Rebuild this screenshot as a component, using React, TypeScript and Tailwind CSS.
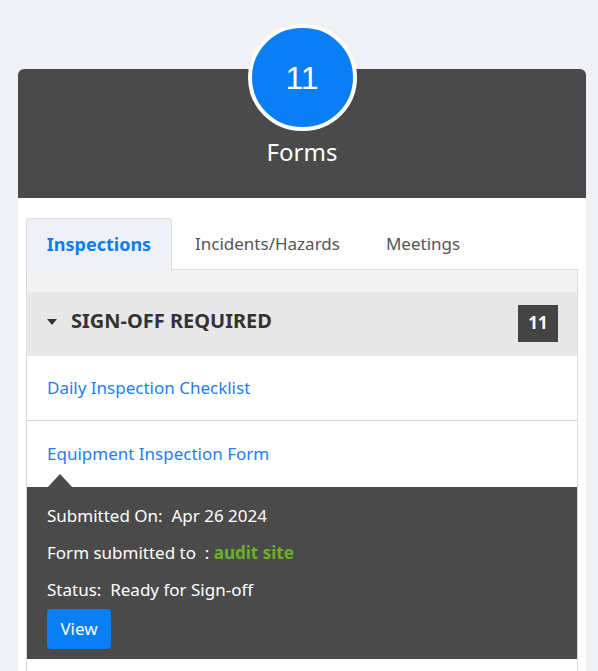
import React from "react";

export default function App() {
  return (
    <div className="min-h-[671px] bg-[#f0f1f6] pt-[69px] px-[18px] pb-0 overflow-hidden" style={{ fontFamily: '"Noto Sans", sans-serif' }}>
      <div className="w-[568px] rounded-t-[6px] bg-white">
        {/* Header */}
        <div className="bg-[#4a4a4a] rounded-t-[6px] h-[129px] flex flex-col items-center">
          <div className="mt-[-45px] w-[109px] h-[107px] rounded-full border-[4px] border-white bg-[#0a7ef5] flex items-center justify-center">
            <span className="text-white text-[32px] leading-none" style={{ fontFamily: '"Liberation Sans", Arial, sans-serif' }}>11</span>
          </div>
          <div className="mt-[5px] text-white text-[24px] leading-[32px]">Forms</div>
        </div>
        {/* Body */}
        <div className="px-[8px] pt-[20px]">
          {/* Tabs */}
          <div className="flex h-[52px] border-b border-[#dcdcdc]">
            <div className="w-[146px] h-[53px] pb-[2px] bg-[#f0f1f6] border border-[#dcdcdc] border-b-0 rounded-t-[4px] flex items-center justify-center text-[#0a7ef5] font-bold text-[18px]">
              Inspections
            </div>
            <div className="ml-[23px] flex items-center text-[#555] text-[17px]">Incidents/Hazards</div>
            <div className="ml-[46px] flex items-center text-[#555] text-[17px]">Meetings</div>
          </div>
          {/* Content */}
          <div className="bg-[#f2f2f2] border-x border-[#dcdcdc] pt-[22px]">
            <div className="bg-[#e8e8e8] rounded-t-[5px] h-[64px] flex items-center pl-[20px] pr-[19px]">
              <svg width="10" height="6" viewBox="0 0 10 6" className="mr-[14px] mb-[5px]">
                <path d="M0 0 L10 0 L5 6 Z" fill="#333" />
              </svg>
              <span className="font-bold text-[20px] text-[#333] flex-1 pb-[6px]">SIGN-OFF REQUIRED</span>
              <span className="bg-[#444] text-white font-bold text-[17px] w-[40px] h-[37px] mb-[2px] flex items-center justify-center">11</span>
            </div>
            <div className="bg-white h-[65px] flex items-center pl-[20px] pb-[1px] border-b border-[#d4d4d4] text-[#1d7ff0] text-[17px]">
              Daily Inspection Checklist
            </div>
            <div className="bg-white h-[66px] flex items-center pl-[20px] pb-[1px] text-[#1d7ff0] text-[17px]">
              Equipment Inspection Form
            </div>
            <div className="relative bg-[#4a4a4a] pl-[20px] pt-[17px] pb-[10px] text-white text-[17px]">
              <svg width="26" height="14" viewBox="0 0 26 14" className="absolute left-[20px] top-[-13px]">
                <path d="M0 14 L13 0 L26 14 Z" fill="#4a4a4a" />
              </svg>
              <div className="leading-[24px]">Submitted On:&nbsp; Apr 26 2024</div>
              <div className="leading-[24px] mt-[13px]">Form submitted to &nbsp;: <span className="text-[#6cb128] font-bold">audit site</span></div>
              <div className="leading-[24px] mt-[13px]">Status:&nbsp; Ready for Sign-off</div>
              <button className="mt-[7px] bg-[#0a7ef5] rounded-[4px] w-[64px] h-[40px] text-white text-[17px]">View</button>
            </div>
            <div className="bg-white h-[40px]"></div>
          </div>
        </div>
      </div>
    </div>
  );
}
